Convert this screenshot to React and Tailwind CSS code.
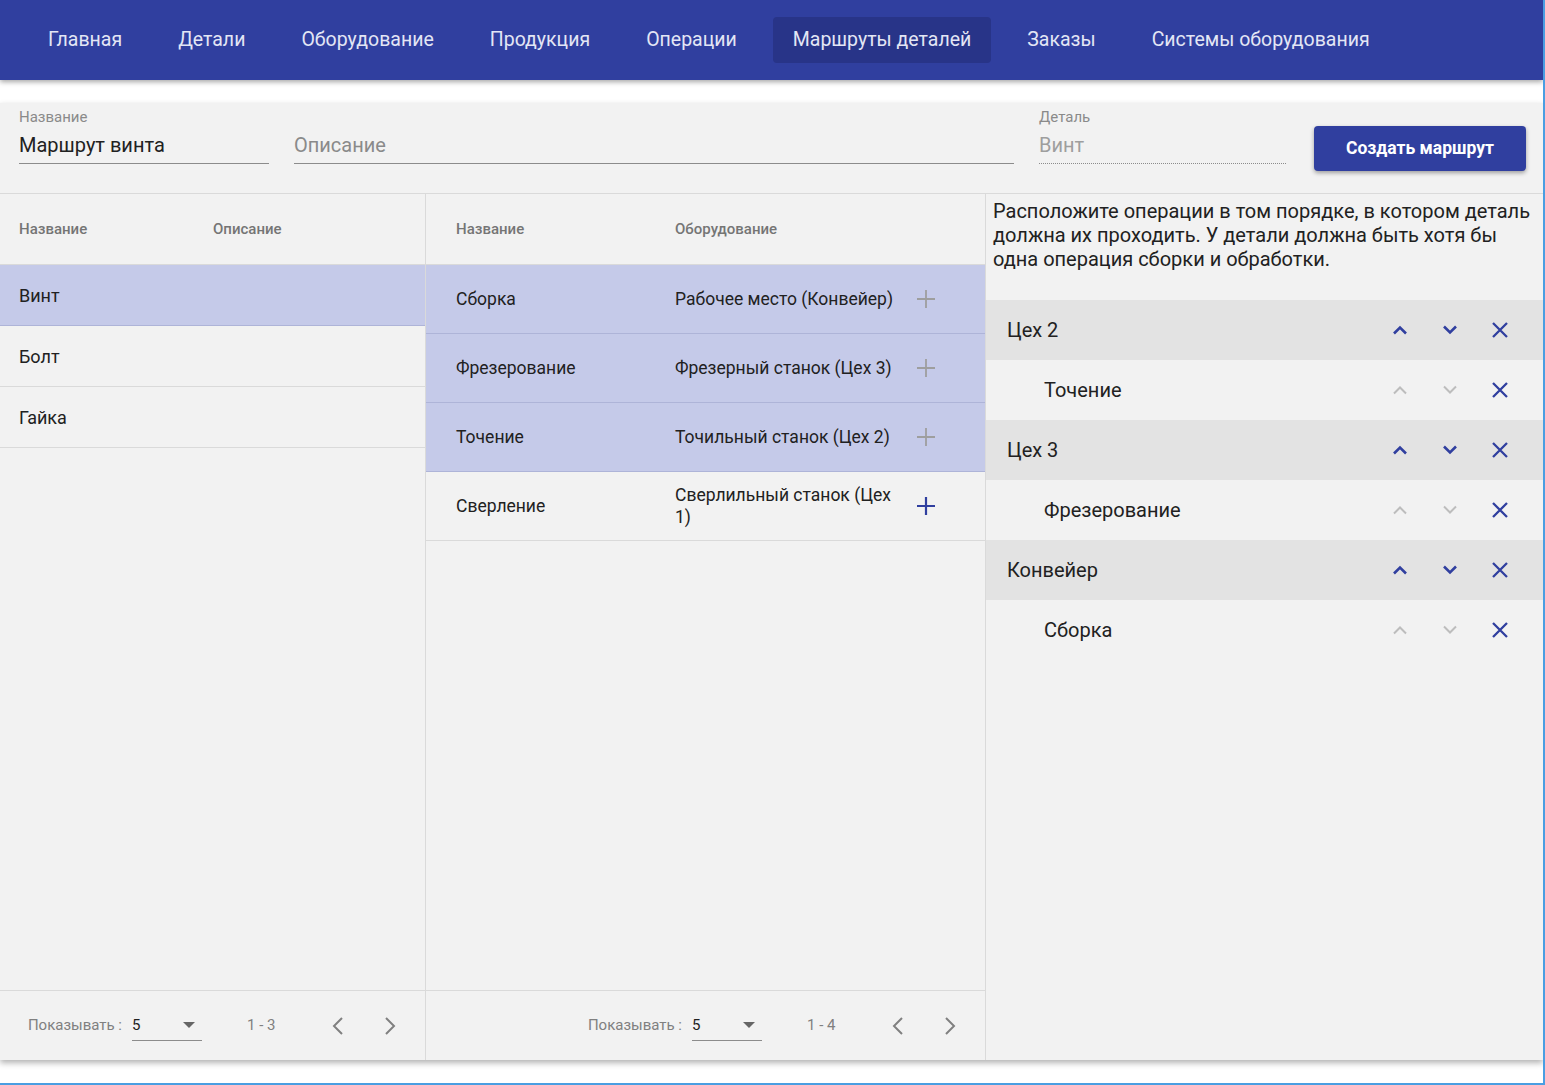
import React from 'react';

const NAV = ['Главная', 'Детали', 'Оборудование', 'Продукция', 'Операции', 'Маршруты деталей', 'Заказы', 'Системы оборудования'];

const DETAILS = [
  { name: 'Винт', selected: true },
  { name: 'Болт' },
  { name: 'Гайка' },
];

const OPERATIONS = [
  { name: 'Сборка', equipment: 'Рабочее место (Конвейер)', added: true },
  { name: 'Фрезерование', equipment: 'Фрезерный станок (Цех 3)', added: true },
  { name: 'Точение', equipment: 'Точильный станок (Цех 2)', added: true },
  { name: 'Сверление', equipment: 'Сверлильный станок (Цех 1)' },
];

const ROUTE = [
  { group: 'Цех 2', ops: ['Точение'] },
  { group: 'Цех 3', ops: ['Фрезерование'] },
  { group: 'Конвейер', ops: ['Сборка'] },
];

// small icons drawn by hand, material-ish
function Chevron({ up, disabled }) {
  return (
    <svg width="16" height="10" viewBox="0 0 16 10" fill="none">
      <polyline
        points={up ? '2,8.5 8,2.5 14,8.5' : '2,1.5 8,7.5 14,1.5'}
        stroke={disabled ? '#bdbdbd' : '#303f9f'}
        strokeWidth={disabled ? 2 : 2.6}
      />
    </svg>
  );
}

function Cross() {
  return (
    <svg width="18" height="18" viewBox="0 0 18 18" fill="none">
      <path d="M2 2 L16 16 M16 2 L2 16" stroke="#303f9f" strokeWidth="2.3" />
    </svg>
  );
}

function Plus({ active }) {
  return (
    <svg width="20" height="20" viewBox="0 0 20 20" fill="none">
      <path d="M10 1 V19 M1 10 H19" stroke={active ? '#303f9f' : '#9e9e9e'} strokeWidth={active ? 2.2 : 1.8} />
    </svg>
  );
}

function PageArrow({ left }) {
  return (
    <svg width="12" height="20" viewBox="0 0 12 20" fill="none">
      <polyline points={left ? '10,2 2,10 10,18' : '2,2 10,10 2,18'} stroke="#808080" strokeWidth="2" />
    </svg>
  );
}

function Pagination({ range }) {
  return (
    <div className="h-[70px] shrink-0 border-t border-[#dadada] flex items-center justify-end pr-[11px] text-[15px] text-[#808080]">
      <span>Показывать :</span>
      <div className="ml-[10px] w-[70px] h-[30px] border-b border-[#8c8c8c] flex items-center justify-between pr-[7px]">
        <span className="text-[#212121]">5</span>
        <span className="w-0 h-0 border-l-[6px] border-r-[6px] border-t-[6px] border-l-transparent border-r-transparent border-t-[#666]" />
      </div>
      <span className="ml-[45px] w-[28px] whitespace-nowrap">{range}</span>
      <button className="ml-[39px] w-12 h-12 flex items-center justify-center">
        <PageArrow left />
      </button>
      <button className="ml-1 w-12 h-12 flex items-center justify-center">
        <PageArrow />
      </button>
    </div>
  );
}

function Field({ label, value, placeholder, width, dotted, muted }) {
  return (
    <div className={`${width} flex flex-col pt-[6px]`}>
      <span className="h-4 text-[15px] leading-4 text-[#8a8a8a]">{label}</span>
      <div
        className={`mt-2 pb-[6px] text-[20px] leading-6 ${
          dotted ? 'border-b border-dotted border-[#8c8c8c]' : 'border-b border-[#8c8c8c]'
        } ${muted ? 'text-[#9e9e9e]' : value ? 'text-[#212121]' : 'text-[#8a8a8a]'}`}
      >
        {value || placeholder}
      </div>
    </div>
  );
}

export default function App() {
  return (
    <div className="h-[1085px] flex flex-col bg-white border-r-2 border-b-2 border-[#4a9ee2] font-['Roboto',sans-serif] overflow-hidden">
      <nav className="h-20 shrink-0 bg-[#303f9f] shadow-[0_2px_5px_rgba(0,0,0,0.35)] flex items-center pl-7 gap-4 relative z-10">
        {NAV.map((item) => (
          <div
            key={item}
            className={`h-[46px] px-5 flex items-center rounded text-[19.5px] text-[#e3e6f5] ${
              item === 'Маршруты деталей' ? 'bg-[#283488]' : ''
            }`}
          >
            {item}
          </div>
        ))}
      </nav>

      <div className="mt-[23px] h-[957px] shrink-0 bg-[#f2f2f2] shadow-[0_3px_6px_rgba(0,0,0,0.3)] flex flex-col">
        {/* route form */}
        <div className="h-[91px] shrink-0 border-b border-[#dadada] flex items-start pl-[19px]">
          <Field label="Название" value="Маршрут винта" width="w-[250px]" />
          <div className="ml-[25px]">
            <Field label="" placeholder="Описание" width="w-[720px]" />
          </div>
          <div className="ml-[25px]">
            <Field label="Деталь" value="Винт" width="w-[247px]" dotted muted />
          </div>
          <button className="ml-[28px] self-center w-[212px] h-[45px] rounded bg-[#303f9f] text-white text-[17.5px] font-bold shadow-[0_2px_4px_rgba(0,0,0,0.35)]">
            Создать маршрут
          </button>
        </div>

        <div className="flex-1 flex min-h-0">
          {/* details */}
          <div className="w-[426px] shrink-0 border-r border-[#dadada] flex flex-col">
            <div className="h-[71px] shrink-0 border-b border-[#dadada] flex items-center pl-[19px] text-[15px] font-medium text-[#757575]">
              <span className="w-[194px]">Название</span>
              <span>Описание</span>
            </div>
            {DETAILS.map((d) => (
              <div
                key={d.name}
                className={`h-[61px] shrink-0 border-b flex items-center pl-[19px] text-[18px] text-[#212121] ${
                  d.selected ? 'bg-[#c5cae9] border-[#aeb4d8]' : 'border-[#dadada]'
                }`}
              >
                {d.name}
              </div>
            ))}
            <div className="flex-1" />
            <Pagination range="1 - 3" />
          </div>

          {/* operations */}
          <div className="w-[560px] shrink-0 border-r border-[#dadada] flex flex-col">
            <div className="h-[71px] shrink-0 border-b border-[#dadada] flex items-center pl-[30px] text-[15px] font-medium text-[#757575]">
              <span className="w-[219px]">Название</span>
              <span>Оборудование</span>
            </div>
            {OPERATIONS.map((op) => (
              <div
                key={op.name}
                className={`h-[69px] shrink-0 border-b flex items-center pl-[30px] text-[17.5px] leading-[22px] text-[#212121] ${
                  op.added ? 'bg-[#c5cae9] border-[#aeb4d8]' : 'border-[#dadada]'
                }`}
              >
                <span className="w-[219px]">{op.name}</span>
                <span className="w-[225px]">{op.equipment}</span>
                <span className="w-[52px] flex justify-center">
                  <Plus active={!op.added} />
                </span>
              </div>
            ))}
            <div className="flex-1" />
            <Pagination range="1 - 4" />
          </div>

          {/* route order */}
          <div className="flex-1 flex flex-col">
            <p className="h-[106px] shrink-0 pl-[7px] pr-[8px] pt-[5px] text-[20px] leading-6 text-[#212121]">
              Расположите операции в том порядке, в котором деталь должна их проходить. У детали должна быть хотя бы одна операция сборки и обработки.
            </p>
            {ROUTE.map((g) => (
              <React.Fragment key={g.group}>
                <div className="h-[60px] flex items-center bg-[#e3e3e3] pl-[21px] pr-[18px] text-[20px] text-[#212121]">
                  <span className="flex-1">{g.group}</span>
                  <span className="w-[50px] flex justify-center">
                    <Chevron up />
                  </span>
                  <span className="w-[50px] flex justify-center">
                    <Chevron />
                  </span>
                  <span className="w-[50px] flex justify-center">
                    <Cross />
                  </span>
                </div>
                {g.ops.map((op) => (
                  <div key={op} className="h-[60px] flex items-center pl-[58px] pr-[18px] text-[20px] text-[#212121]">
                    <span className="flex-1">{op}</span>
                    <span className="w-[50px] flex justify-center">
                      <Chevron up disabled />
                    </span>
                    <span className="w-[50px] flex justify-center">
                      <Chevron disabled />
                    </span>
                    <span className="w-[50px] flex justify-center">
                      <Cross />
                    </span>
                  </div>
                ))}
              </React.Fragment>
            ))}
          </div>
        </div>
      </div>
    </div>
  );
}
